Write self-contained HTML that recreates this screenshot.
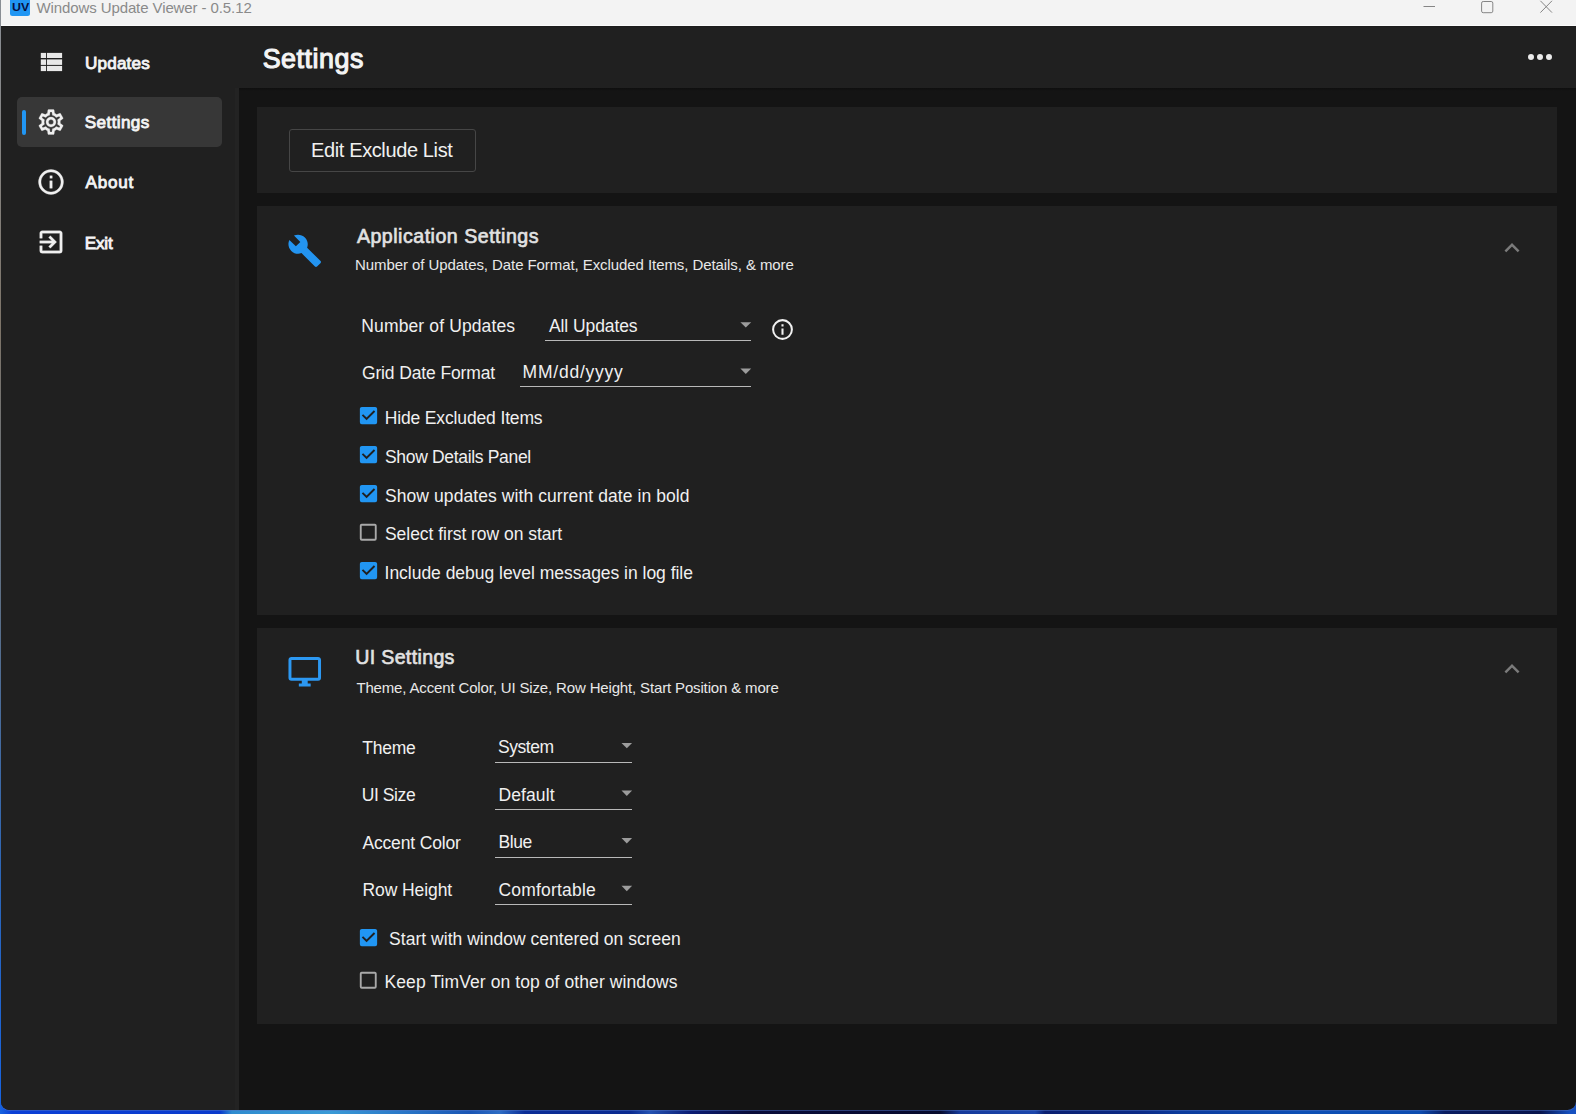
<!DOCTYPE html>
<html lang="en"><head><meta charset="utf-8"><title>Windows Update Viewer - 0.5.12</title>
<style>
html,body{margin:0;padding:0;}
body{width:1576px;height:1114px;position:relative;overflow:hidden;background:#141414;font-family:'Liberation Sans',sans-serif;}
.a{position:absolute;}
.t{position:absolute;white-space:pre;line-height:1em;font-family:'Liberation Sans',sans-serif;}
svg{position:absolute;overflow:visible;}
.ul{position:absolute;height:1.5px;background:#b9b9b9;}
</style></head><body>
<!-- desktop strip behind window -->
<div class="a" style="left:0;top:1090px;width:1576px;height:24px;background:linear-gradient(90deg,#1763e0 0px,#0b3fd6 12px,#0a3acc 220px,#2f8ccf 232px,#3a9ad6 330px,#2a78c8 400px,#1a55b4 470px,#2d6cc4 500px,#0b2c96 525px,#0a2a90 630px,#2452b2 650px,#0b1c74 690px,#090c3a 750px,#070a2c 940px,#15399a 960px,#1b46ac 1035px,#0a1f70 1045px,#0b2a86 1140px,#0b3a9c 1180px,#0d4fb5 1300px,#0d4cb0 1420px,#0a1c60 1445px,#08144c 1540px,#1550c0 1570px);"></div>
<div class="a" style="left:0;top:0;width:2px;height:1100px;background:linear-gradient(180deg,#8a8f96 0%,#7d7468 30%,#5c6f86 55%,#2c66b8 80%,#1763e0 100%);"></div>
<!-- window -->
<div class="a" id="win" style="left:1px;top:0;width:1575px;height:1109.5px;background:#141414;border-radius:0 0 8.5px 8.5px;overflow:hidden;box-shadow:0 1px 0 rgba(80,115,195,.5);">
  <div class="a" style="left:0;top:0;width:1575px;height:26px;background:#f3f3f3;box-shadow:inset 0 -1px 0 #fbfbfb;"></div>
  <div class="a" style="left:0;top:26px;width:237.8px;height:1090px;background:#202020;"></div>
  <div class="a" style="left:233.8px;top:88px;width:4px;height:1030px;background:#232323;"></div>
  <div class="a" style="left:237.8px;top:26px;width:1340px;height:62.1px;background:#202020;"></div>
  <div class="a" style="left:237.8px;top:88.1px;width:1340px;height:2.5px;background:linear-gradient(180deg,rgba(0,0,0,.28),rgba(0,0,0,0));"></div>
  <div class="a" style="left:0;top:26px;width:1575px;height:2px;background:linear-gradient(180deg,rgba(0,0,0,.18),rgba(0,0,0,0));"></div>
  <!-- cards -->
  <div class="a" style="left:256px;top:107.2px;width:1300px;height:86.1px;background:#202020;"></div>
  <div class="a" style="left:256px;top:206.3px;width:1300px;height:408.5px;background:#202020;"></div>
  <div class="a" style="left:256px;top:627.8px;width:1300px;height:396px;background:#202020;"></div>
</div>
<!-- title bar -->
<div class="a" style="left:10.2px;top:-2px;width:20px;height:18.3px;background:#2196f3;border-radius:2.5px;"></div>
<div class="t" style="left:11.9px;top:1.5px;font-size:11.5px;font-weight:700;color:#07103f;transform:scaleX(1.08);transform-origin:0 0;">UV</div>
<svg style="left:1416px;top:0" width="150" height="20" fill="none" stroke="#858585" stroke-width="1">
  <path d="M7.5 6.5H19"/>
  <rect x="65.6" y="1.5" width="11.2" height="11.2" rx="1.6"/>
  <path d="M124.4 0.8L136 12.6M136 0.8L124.4 12.6"/>
</svg>
<!-- sidebar -->
<div class="a" style="left:17.3px;top:97.2px;width:204.6px;height:49.8px;background:#373737;border-radius:5px;"></div>
<div class="a" style="left:22px;top:109.6px;width:4px;height:25.2px;background:#2196f3;border-radius:2px;"></div>
<svg style="left:0;top:0" width="80" height="80" fill="#e8e8e8"><rect x="40.8" y="52.9" width="5.2" height="5.1"/><rect x="46.9" y="52.9" width="15.2" height="5.1"/><rect x="40.8" y="59.4" width="5.2" height="5.5"/><rect x="46.9" y="59.4" width="15.2" height="5.5"/><rect x="40.8" y="65.9" width="5.2" height="5.2"/><rect x="46.9" y="65.9" width="15.2" height="5.2"/></svg>
<svg style="left:36px;top:106.9px" width="30" height="30" viewBox="0 0 24 24" fill="#f0f0f0" stroke="#f0f0f0" stroke-width=".2"><path d="M12,8A4,4 0 0,1 16,12A4,4 0 0,1 12,16A4,4 0 0,1 8,12A4,4 0 0,1 12,8M12,10A2,2 0 0,0 10,12A2,2 0 0,0 12,14A2,2 0 0,0 14,12A2,2 0 0,0 12,10M10,22C9.75,22 9.54,21.82 9.5,21.58L9.13,18.93C8.5,18.68 7.96,18.34 7.44,17.94L4.95,18.95C4.73,19.03 4.46,18.95 4.34,18.73L2.34,15.27C2.21,15.05 2.27,14.78 2.46,14.63L4.57,12.97L4.5,12L4.57,11L2.46,9.37C2.27,9.22 2.21,8.95 2.34,8.73L4.34,5.27C4.46,5.05 4.73,4.96 4.95,5.05L7.44,6.05C7.96,5.66 8.5,5.32 9.13,5.07L9.5,2.42C9.54,2.18 9.75,2 10,2H14C14.25,2 14.46,2.18 14.5,2.42L14.87,5.07C15.5,5.32 16.04,5.66 16.56,6.05L19.05,5.05C19.27,4.96 19.54,5.05 19.66,5.27L21.66,8.73C21.79,8.95 21.73,9.22 21.54,9.37L19.43,11L19.5,12L19.43,13L21.54,14.63C21.73,14.78 21.79,15.05 21.66,15.27L19.66,18.73C19.54,18.95 19.27,19.04 19.05,18.95L16.56,17.95C16.04,18.34 15.5,18.68 14.87,18.93L14.5,21.58C14.46,21.82 14.25,22 14,22H10M11.25,4L10.88,6.61C9.68,6.86 8.62,7.5 7.85,8.39L5.44,7.35L4.69,8.65L6.8,10.2C6.4,11.37 6.4,12.64 6.8,13.8L4.68,15.36L5.43,16.66L7.86,15.62C8.63,16.5 9.68,17.14 10.87,17.38L11.24,20H12.76L13.13,17.39C14.32,17.14 15.37,16.5 16.14,15.62L18.57,16.66L19.32,15.36L17.2,13.81C17.6,12.64 17.6,11.37 17.2,10.2L19.31,8.65L18.56,7.35L16.15,8.39C15.38,7.5 14.32,6.86 13.12,6.62L12.75,4H11.25Z"/></svg>
<svg style="left:36px;top:167.4px" width="30" height="30" viewBox="0 0 24 24" fill="#f0f0f0" stroke="#f0f0f0" stroke-width=".25"><path d="M11,9H13V7H11M12,20C7.59,20 4,16.41 4,12C4,7.59 7.59,4 12,4C16.41,4 20,7.59 20,12C20,16.41 16.41,20 12,20M12,2A10,10 0 0,0 2,12A10,10 0 0,0 12,22A10,10 0 0,0 22,12A10,10 0 0,0 12,2M11,17H13V11H11V17Z"/></svg>
<svg style="left:35.6px;top:227.1px" width="30" height="30" viewBox="0 0 24 24" fill="#f0f0f0" stroke="#f0f0f0" stroke-width=".25"><path d="M19,3H5C3.89,3 3,3.89 3,5V9H5V5H19V19H5V15H3V19A2,2 0 0,0 5,21H19A2,2 0 0,0 21,19V5C21,3.89 20.1,3 19,3M10.08,15.58L11.5,17L16.5,12L11.5,7L10.08,8.41L12.67,11H3V13H12.67L10.08,15.58Z"/></svg>
<!-- header dots -->
<svg style="left:1522px;top:39px" width="36" height="36" viewBox="0 0 24 24" fill="#ebebeb"><path d="M16,12A2,2 0 0,1 18,10A2,2 0 0,1 20,12A2,2 0 0,1 18,14A2,2 0 0,1 16,12M10,12A2,2 0 0,1 12,10A2,2 0 0,1 14,12A2,2 0 0,1 12,14A2,2 0 0,1 10,12M4,12A2,2 0 0,1 6,10A2,2 0 0,1 8,12A2,2 0 0,1 6,14A2,2 0 0,1 4,12Z"/></svg>
<!-- button -->
<div class="a" style="left:289.4px;top:129px;width:184.6px;height:41.2px;border:1.5px solid #464646;border-radius:3px;"></div>
<!-- card icons -->
<svg style="left:286.8px;top:233.1px" width="35.5" height="35.5" viewBox="0 0 24 24" fill="#2394f0"><path d="M22.7,19L13.6,9.9C14.5,7.6 14,4.9 12.1,3C10.1,1 7.1,0.6 4.7,1.7L9,6L6,9L1.6,4.7C0.4,7.1 0.9,10.1 2.9,12.1C4.8,14 7.5,14.5 9.8,13.6L18.9,22.7C19.3,23.1 19.9,23.1 20.3,22.7L22.6,20.4C23.1,20 23.1,19.3 22.7,19Z"/></svg>
<svg style="left:286.95px;top:654.2px" width="35.5" height="35.5" viewBox="0 0 24 24" fill="#2c98f2"><path d="M21,16H3V4H21M21,2H3C1.89,2 1,2.89 1,4V16A2,2 0 0,0 3,18H10V20H8V22H16V20H14V18H21A2,2 0 0,0 23,16V4C23,2.89 22.1,2 21,2Z"/></svg>
<svg style="left:1496.85px;top:232.7px" width="30" height="30" viewBox="0 0 24 24" fill="#7b7b7b"><path d="M7.41,15.41L12,10.83L16.59,15.41L18,14L12,8L6,14L7.41,15.41Z"/></svg>
<svg style="left:1496.85px;top:654.3px" width="30" height="30" viewBox="0 0 24 24" fill="#7b7b7b"><path d="M7.41,15.41L12,10.83L16.59,15.41L18,14L12,8L6,14L7.41,15.41Z"/></svg>
<!-- combos -->
<div class="ul" style="left:545px;top:339.6px;width:205.6px;"></div>
<div class="ul" style="left:520.3px;top:385.8px;width:230.3px;"></div>
<div class="ul" style="left:494.8px;top:761.7px;width:137px;"></div>
<div class="ul" style="left:494.8px;top:808.8px;width:137px;"></div>
<div class="ul" style="left:494.8px;top:856.7px;width:137px;"></div>
<div class="ul" style="left:494.8px;top:903.7px;width:137px;"></div>
<svg style="left:0;top:0" width="1576" height="1114" fill="#9c9c9c">
  <path d="M740.4 322.2h10.8l-5.4 5.4z"/>
  <path d="M740.4 368.6h10.8l-5.4 5.4z"/>
  <path d="M621.5 742.9h10.6l-5.3 5.4z"/>
  <path d="M621.5 790.6h10.6l-5.3 5.4z"/>
  <path d="M621.5 838.1h10.6l-5.3 5.4z"/>
  <path d="M621.5 885.8h10.6l-5.3 5.4z"/>
</svg>
<svg style="left:770px;top:316.6px" width="25" height="25" viewBox="0 0 24 24" fill="#f0f0f0"><path d="M11,9H13V7H11M12,20C7.59,20 4,16.41 4,12C4,7.59 7.59,4 12,4C16.41,4 20,7.59 20,12C20,16.41 16.41,20 12,20M12,2A10,10 0 0,0 2,12A10,10 0 0,0 12,22A10,10 0 0,0 22,12A10,10 0 0,0 12,2M11,17H13V11H11V17Z"/></svg>
<!-- checkboxes -->
<svg style="left:357.00px;top:404.00px" width="23" height="23" viewBox="0 0 24 24" fill="#2196f3"><path d="M10,17L5,12L6.41,10.58L10,14.17L17.59,6.58L19,8M19,3H5C3.89,3 3,3.89 3,5V19A2,2 0 0,0 5,21H19A2,2 0 0,0 21,19V5C21,3.89 20.1,3 19,3Z"/></svg>
<svg style="left:357.00px;top:443.00px" width="23" height="23" viewBox="0 0 24 24" fill="#2196f3"><path d="M10,17L5,12L6.41,10.58L10,14.17L17.59,6.58L19,8M19,3H5C3.89,3 3,3.89 3,5V19A2,2 0 0,0 5,21H19A2,2 0 0,0 21,19V5C21,3.89 20.1,3 19,3Z"/></svg>
<svg style="left:357.00px;top:481.90px" width="23" height="23" viewBox="0 0 24 24" fill="#2196f3"><path d="M10,17L5,12L6.41,10.58L10,14.17L17.59,6.58L19,8M19,3H5C3.89,3 3,3.89 3,5V19A2,2 0 0,0 5,21H19A2,2 0 0,0 21,19V5C21,3.89 20.1,3 19,3Z"/></svg>
<svg style="left:357.25px;top:520.85px" width="22.5" height="22.5" viewBox="0 0 24 24" fill="#a9a9a9"><path d="M19,3H5C3.89,3 3,3.89 3,5V19A2,2 0 0,0 5,21H19A2,2 0 0,0 21,19V5C21,3.89 20.1,3 19,3M19,5V19H5V5H19Z"/></svg>
<svg style="left:357.00px;top:559.10px" width="23" height="23" viewBox="0 0 24 24" fill="#2196f3"><path d="M10,17L5,12L6.41,10.58L10,14.17L17.59,6.58L19,8M19,3H5C3.89,3 3,3.89 3,5V19A2,2 0 0,0 5,21H19A2,2 0 0,0 21,19V5C21,3.89 20.1,3 19,3Z"/></svg>
<svg style="left:357.00px;top:925.50px" width="23" height="23" viewBox="0 0 24 24" fill="#2196f3"><path d="M10,17L5,12L6.41,10.58L10,14.17L17.59,6.58L19,8M19,3H5C3.89,3 3,3.89 3,5V19A2,2 0 0,0 5,21H19A2,2 0 0,0 21,19V5C21,3.89 20.1,3 19,3Z"/></svg>
<svg style="left:357.25px;top:968.85px" width="22.5" height="22.5" viewBox="0 0 24 24" fill="#a9a9a9"><path d="M19,3H5C3.89,3 3,3.89 3,5V19A2,2 0 0,0 5,21H19A2,2 0 0,0 21,19V5C21,3.89 20.1,3 19,3M19,5V19H5V5H19Z"/></svg>
<div class="t" style="left:36.43px;top:0.30px;font-size:15px;font-weight:400;color:#8a8a8a;letter-spacing:-0.098px">Windows Update Viewer - 0.5.12</div>
<div class="t" style="left:85.05px;top:54.52px;font-size:17.1px;font-weight:400;-webkit-text-stroke:0.86px currentColor;color:#f4f4f4;letter-spacing:0.168px">Updates</div>
<div class="t" style="left:84.83px;top:113.52px;font-size:17.1px;font-weight:400;-webkit-text-stroke:0.86px currentColor;color:#f4f4f4;letter-spacing:0.383px">Settings</div>
<div class="t" style="left:85.51px;top:173.52px;font-size:17.1px;font-weight:400;-webkit-text-stroke:0.86px currentColor;color:#f4f4f4;letter-spacing:0.758px">About</div>
<div class="t" style="left:84.83px;top:234.52px;font-size:17.1px;font-weight:400;-webkit-text-stroke:0.86px currentColor;color:#f4f4f4;letter-spacing:-0.230px">Exit</div>
<div class="t" style="left:262.65px;top:46.23px;font-size:26.9px;font-weight:400;-webkit-text-stroke:1.08px currentColor;color:#f4f4f4;letter-spacing:0.514px">Settings</div>
<div class="t" style="left:311.09px;top:140.07px;font-size:20px;font-weight:400;color:#f0f0f0;letter-spacing:-0.383px">Edit Exclude List</div>
<div class="t" style="left:356.88px;top:227.41px;font-size:19.6px;font-weight:400;-webkit-text-stroke:0.63px currentColor;color:#e2e2e2;letter-spacing:0.502px">Application Settings</div>
<div class="t" style="left:355.10px;top:257.30px;font-size:15px;font-weight:400;color:#e8e8e8;letter-spacing:-0.076px">Number of Updates, Date Format, Excluded Items, Details, &amp; more</div>
<div class="t" style="left:361.34px;top:318.19px;font-size:17.5px;font-weight:400;color:#f0f0f0;letter-spacing:0.124px">Number of Updates</div>
<div class="t" style="left:548.99px;top:318.19px;font-size:17.5px;font-weight:400;color:#f0f0f0;letter-spacing:-0.088px">All Updates</div>
<div class="t" style="left:361.93px;top:365.19px;font-size:17.5px;font-weight:400;color:#f0f0f0;letter-spacing:-0.127px">Grid Date Format</div>
<div class="t" style="left:522.59px;top:364.19px;font-size:17.5px;font-weight:400;color:#f0f0f0;letter-spacing:0.763px">MM/dd/yyyy</div>
<div class="t" style="left:384.71px;top:410.19px;font-size:17.5px;font-weight:400;color:#f0f0f0;letter-spacing:-0.143px">Hide Excluded Items</div>
<div class="t" style="left:384.97px;top:449.19px;font-size:17.5px;font-weight:400;color:#f0f0f0;letter-spacing:-0.326px">Show Details Panel</div>
<div class="t" style="left:384.97px;top:488.19px;font-size:17.5px;font-weight:400;color:#f0f0f0;letter-spacing:0.080px">Show updates with current date in bold</div>
<div class="t" style="left:384.97px;top:526.19px;font-size:17.5px;font-weight:400;color:#f0f0f0;letter-spacing:-0.036px">Select first row on start</div>
<div class="t" style="left:384.58px;top:565.19px;font-size:17.5px;font-weight:400;color:#f0f0f0;letter-spacing:-0.026px">Include debug level messages in log file</div>
<div class="t" style="left:355.17px;top:648.41px;font-size:19.6px;font-weight:400;-webkit-text-stroke:0.63px currentColor;color:#e2e2e2;letter-spacing:0.342px">UI Settings</div>
<div class="t" style="left:356.38px;top:680.30px;font-size:15px;font-weight:400;color:#e8e8e8;letter-spacing:-0.152px">Theme, Accent Color, UI Size, Row Height, Start Position &amp; more</div>
<div class="t" style="left:362.24px;top:740.19px;font-size:17.5px;font-weight:400;color:#f0f0f0;letter-spacing:-0.237px">Theme</div>
<div class="t" style="left:497.97px;top:739.19px;font-size:17.5px;font-weight:400;color:#f0f0f0;letter-spacing:-0.460px">System</div>
<div class="t" style="left:361.69px;top:787.19px;font-size:17.5px;font-weight:400;color:#f0f0f0;letter-spacing:-0.410px">UI Size</div>
<div class="t" style="left:498.45px;top:787.19px;font-size:17.5px;font-weight:400;color:#f0f0f0;letter-spacing:0.115px">Default</div>
<div class="t" style="left:362.42px;top:835.19px;font-size:17.5px;font-weight:400;color:#f0f0f0;letter-spacing:-0.154px">Accent Color</div>
<div class="t" style="left:498.45px;top:834.19px;font-size:17.5px;font-weight:400;color:#f0f0f0;letter-spacing:-0.377px">Blue</div>
<div class="t" style="left:362.45px;top:882.19px;font-size:17.5px;font-weight:400;color:#f0f0f0;letter-spacing:-0.079px">Row Height</div>
<div class="t" style="left:498.47px;top:882.19px;font-size:17.5px;font-weight:400;color:#f0f0f0;letter-spacing:0.193px">Comfortable</div>
<div class="t" style="left:389.11px;top:931.19px;font-size:17.5px;font-weight:400;color:#f0f0f0;letter-spacing:0.025px">Start with window centered on screen</div>
<div class="t" style="left:384.52px;top:974.19px;font-size:17.5px;font-weight:400;color:#f0f0f0;letter-spacing:0.090px">Keep TimVer on top of other windows</div>
</body></html>
